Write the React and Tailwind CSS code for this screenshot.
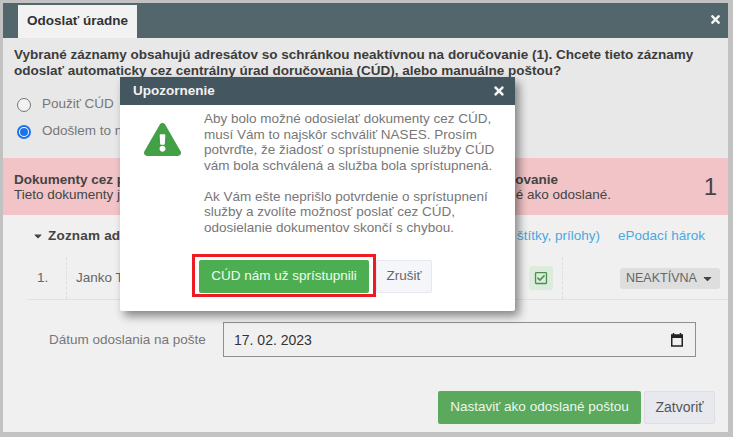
import React from "react";
import { FaTimes, FaExclamationTriangle, FaCaretDown, FaRegCheckSquare } from "react-icons/fa";

function Radio({ checked, label }) {
  return (
    <div className="flex items-center h-[27px]">
      {checked ? (
        <span className="w-[14px] h-[14px] rounded-full border-2 border-[#1a73e8] flex items-center justify-center bg-white">
          <span className="w-[8px] h-[8px] rounded-full bg-[#1a73e8]"></span>
        </span>
      ) : (
        <span className="w-[14px] h-[14px] rounded-full border border-[#767676] bg-[#f2f2f2]"></span>
      )}
      <span className="ml-[11px] text-[13.5px] text-[#777]">{label}</span>
    </div>
  );
}

// UPOZORNENIE DIALOG
function WarningModal() {
  return (
    <div className="absolute left-[120px] top-[77px] w-[395px] h-[234px] bg-white rounded-[2px] shadow-[4px_5px_10px_rgba(0,0,0,0.45)]">
      <div className="h-[28px] bg-[#44565f] flex items-center justify-between pl-[13px] pr-[9px]">
        <span className="text-[13.5px] font-bold text-[#f2f2f2]">Upozornenie</span>
        <FaTimes className="text-[#f4f4f4] text-[14px]" />
      </div>
      <div className="flex">
        <div className="w-[84px] pt-[16px] pl-[24px] shrink-0">
          <FaExclamationTriangle className="text-[#43a047] text-[37px]" />
        </div>
        <div className="pt-[6px] text-[13.5px] leading-[15.5px] text-[#777] whitespace-nowrap">
          <div>Aby bolo možné odosielať dokumenty cez CÚD,</div>
          <div>musí Vám to najskôr schváliť NASES. Prosím</div>
          <div>potvrďte, že žiadosť o sprístupnenie služby CÚD</div>
          <div>vám bola schválená a služba bola sprístupnená.</div>
          <div className="h-[15.5px]"></div>
          <div>Ak Vám ešte neprišlo potvrdenie o sprístupnení</div>
          <div>služby a zvolíte možnosť poslať cez CÚD,</div>
          <div>odosielanie dokumentov skončí s chybou.</div>
        </div>
      </div>
      <div className="flex items-start mt-[19px] ml-[72px]">
        <div className="border-[3px] border-[#ed1c24] pt-[3px] pb-[1px] px-[4px]">
          <div className="w-[170px] h-[33px] bg-[#4cae50] rounded-[2px] flex items-center justify-center text-[13.5px] text-[#f2f9f2]">
            CÚD nám už sprístupnili
          </div>
        </div>
        <div className="w-[56px] h-[33px] mt-[6px] bg-[#f5f6fa] border border-[#e8e8ee] rounded-[2px] flex items-center justify-center text-[13.5px] text-[#666]">
          Zrušiť
        </div>
      </div>
    </div>
  );
}

export default function App() {
  return (
    <div className="relative w-[733px] h-[437px] overflow-hidden bg-[#c2c2c2] pt-[3px] pl-[3px] pr-[5px] pb-[5px] font-['Liberation_Sans',Arial,sans-serif]">
      <div className="h-full flex flex-col bg-[#f0f0f0]">

        {/* HEADER */}
        <div className="h-[35px] shrink-0 bg-[#53666c] flex justify-between pl-[15px] pr-[6px]">
          <div className="mt-[2px] w-[119px] bg-[#f2f2f2] flex items-center justify-center text-[13.5px] font-bold text-[#333]">
            Odoslať úradne
          </div>
          <FaTimes className="text-[#f4f4f4] text-[13px] mt-[10px]" />
        </div>

        {/* QUESTION */}
        <div className="h-[120px] shrink-0 bg-[#e8e8e8] pl-[11px] pt-[9px]">
          <p className="text-[13.5px] leading-[16px] font-bold text-[#3c3c3c] whitespace-nowrap">
            Vybrané záznamy obsahujú adresátov so schránkou neaktívnou na doručovanie (1). Chcete tieto záznamy
            <br />
            odoslať automaticky cez centrálny úrad doručovania (CÚD), alebo manuálne poštou?
          </p>
          <div className="mt-[12px] pl-[3px]">
            <Radio label="Použiť CÚD" />
            <Radio checked label="Odošlem to na poštu sám" />
          </div>
        </div>

        {/* ALERT */}
        <div className="h-[57px] shrink-0 bg-[#f2c4c8] pl-[11px] pr-[11px] flex items-center justify-between">
          <div className="text-[13.5px] leading-[15px] text-[#444] whitespace-nowrap">
            <div className="font-bold w-[544px] flex justify-between">
              <span>Dokumenty cez poštu</span>
              <span>ovanie</span>
            </div>
            <div className="w-[597px] flex justify-between">
              <span>Tieto dokumenty je</span>
              <span>é ako odoslané.</span>
            </div>
          </div>
          <span className="text-[24px] text-[#444]">1</span>
        </div>

        {/* ZOZNAM */}
        <div className="flex items-center justify-between h-[42px] shrink-0 pl-[29px] pr-[23px]">
          <div className="flex items-center text-[13.5px] font-bold text-[#444] tracking-[0.2px]">
            <FaCaretDown className="text-[12px] mr-[4px]" />
            Zoznam adresátov
          </div>
          <div className="flex text-[13.5px] text-[#4aa8e0] gap-[18px]">
            <span>štítky, prílohy)</span>
            <span>ePodací hárok</span>
          </div>
        </div>

        {/* TABLE ROW */}
        <div className="flex items-center h-[43px] shrink-0 ml-[24px] border-b border-[#e2e2e2] text-[#666] text-[13.5px]">
          <div className="w-[40px] h-full flex items-center pl-[10px] border-r border-dashed border-[#dedede]">1.</div>
          <div className="flex-1 pl-[9px]">Janko T</div>
          <div className="w-[24px] h-[24px] rounded-[3px] bg-[#dcecdc] flex items-center justify-center mr-[9px]">
            <FaRegCheckSquare className="text-[#4a8f4d] text-[14px]" />
          </div>
          <div className="h-full flex items-center border-l border-dashed border-[#dedede] pl-[57px] pr-[8px]">
            <div className="w-[100px] h-[21px] rounded-[3px] bg-[#dedede] flex items-center justify-between pl-[6px] pr-[6px] text-[#666] text-[12.5px]">
              NEAKTÍVNA
              <FaCaretDown className="text-[13px] text-[#444]" />
            </div>
          </div>
        </div>

        {/* DATE */}
        <div className="flex items-center mt-[22px] ml-[46px] shrink-0">
          <span className="w-[174px] pt-[1px] text-[13.5px] text-[#777]">Dátum odoslania na pošte</span>
          <div className="w-[473px] h-[35px] border border-[#8f8f8f] flex items-center justify-between pl-[10px] pr-[12px] text-[14px] text-[#333]">
            <span className="pt-[1px]">17. 02. 2023</span>
            <svg width="12" height="14" viewBox="0 0 12 14">
              <path d="M2.5 0v2M9.5 0v2" stroke="#222" strokeWidth="1.5" />
              <rect x="0.75" y="2" width="10.5" height="11" fill="none" stroke="#222" strokeWidth="1.5" />
              <rect x="0.75" y="2" width="10.5" height="3" fill="#222" />
            </svg>
          </div>
        </div>

        {/* FOOTER */}
        <div className="flex justify-end mt-[34px] pr-[13px] shrink-0 gap-[3px]">
          <div className="w-[203px] h-[33px] bg-[#5aa95d] rounded-[2px] flex items-center justify-center text-[13.5px] text-[#eef7ee]">
            Nastaviť ako odoslané poštou
          </div>
          <div className="w-[71px] h-[33px] bg-[#e8e9ee] border border-[#dedfe4] rounded-[2px] flex items-center justify-center text-[14px] text-[#555]">
            Zatvoriť
          </div>
        </div>
      </div>

      <WarningModal />
    </div>
  );
}
